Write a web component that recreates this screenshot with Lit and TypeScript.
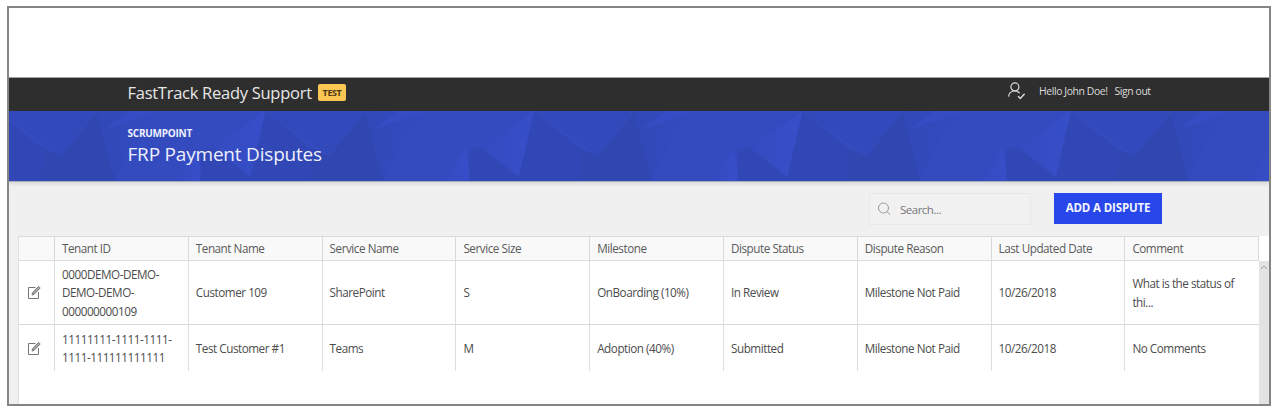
import { LitElement, html, css, svg } from "lit";
import { customElement } from "lit/decorators.js";

interface Dispute {
  tenantId: string[];
  tenant: string;
  service: string;
  size: string;
  milestone: string;
  status: string;
  reason: string;
  updated: string;
  comment: string[];
}

const COLUMNS = [
  "Tenant ID", "Tenant Name", "Service Name", "Service Size", "Milestone",
  "Dispute Status", "Dispute Reason", "Last Updated Date", "Comment",
];

const DISPUTES: Dispute[] = [
  {
    tenantId: ["0000DEMO-DEMO-", "DEMO-DEMO-", "000000000109"],
    tenant: "Customer 109", service: "SharePoint", size: "S",
    milestone: "OnBoarding (10%)", status: "In Review", reason: "Milestone Not Paid",
    updated: "10/26/2018", comment: ["What is the status of", "thi..."],
  },
  {
    tenantId: ["11111111-1111-1111-", "1111-111111111111"],
    tenant: "Test Customer #1", service: "Teams", size: "M",
    milestone: "Adoption (40%)", status: "Submitted", reason: "Milestone Not Paid",
    updated: "10/26/2018", comment: ["No Comments"],
  },
];

@customElement("top-bar")
class TopBar extends LitElement {
  static styles = css`
    :host { display: flex; height: 34px; box-sizing: border-box; background: #2e2e2e; color: #e6e6e6; border-top: 1px solid #a3a3a3; padding-left: 118.5px; }
    .title { font-size: 16.5px; line-height: 30px; letter-spacing: -0.27px; white-space: nowrap; width: 190.5px; }
    .badge { box-sizing: border-box; width: 28px; height: 17px; margin-top: 6px; border-radius: 2px; background: #fdc753; color: #4b3a18; font-size: 9px; font-weight: 700; line-height: 17px; text-align: center; letter-spacing: -0.4px; }
    .user { width: 18px; height: 18px; margin: 4px 0 0 661px; }
    .hello { width: 75.5px; margin-left: 14px; }
    .hello, .out { font-size: 10.4px; line-height: 27px; letter-spacing: -0.4px; white-space: nowrap; color: #dcdcdc; }
  `;
  render() {
    return html`
      <div class="title">FastTrack Ready Support</div>
      <div class="badge">TEST</div>
      <svg class="user" viewBox="0 0 18 18" fill="none" stroke="#d6d6d6" stroke-width="1.2">
        <circle cx="7.9" cy="4.9" r="4" />
        <path d="M1.6 14.6C1.9 11.2 4.4 9 7.9 9C10 9 11.7 9.8 12.8 11.2" />
        <path d="M11 14.3L13.3 16.4L17.6 11.8" stroke-width="1.5" />
      </svg>
      <div class="hello">Hello John Doe!</div>
      <div class="out">Sign out</div>
    `;
  }
}

@customElement("page-banner")
class PageBanner extends LitElement {
  static styles = css`
    :host { display: grid; height: 70px; background: #344bc0; color: #eef0fc; overflow: hidden; }
    .facets { grid-area: 1 / 1; width: 100%; height: 70px; display: block; }
    .heading { grid-area: 1 / 1; z-index: 1; padding: 15px 0 0 118.5px; }
    .eyebrow { font-size: 10px; line-height: 15px; font-weight: 700; letter-spacing: -0.25px; }
    .name { font-size: 19px; line-height: 26px; letter-spacing: -0.2px; white-space: nowrap; }
  `;
  render() {
    return html`
      <svg class="facets">
        <defs>
          <linearGradient id="lit" x1="0" y1="0" x2="1" y2="0">
            <stop offset="0" stop-color="#344bc0" /><stop offset="1" stop-color="#364ec8" />
          </linearGradient>
          <linearGradient id="side" x1="0" y1="0" x2="1" y2="0">
            <stop offset="0" stop-color="#3148b8" /><stop offset="1" stop-color="#344bc0" />
          </linearGradient>
          <pattern id="tile" x="-77" y="0" width="268.5" height="70" patternUnits="userSpaceOnUse">
            ${svg`
              <path d="M64.8 0H165L129 45Z" fill="#3249bb" />
              <path d="M64.8 0L112 38L129 45L110 70H48.5Z" fill="#3147b6" />
              <path d="M165 1L183 70H110L112 38L129 45Z" fill="#3046b1" />
              <path d="M165 0H228L205 22L183 70Z" fill="url(#side)" />
              <path d="M173 18L198 0H228Z" fill="#354cc4" />
              <path d="M64.8 0L13.2 37L49.8 66Z" fill="url(#lit)" />
              <path d="M-3.5 38L13.2 37L49.8 66L48.5 70H0Z" fill="#3147b6" />
              <path d="M265 38L268.5 60V70H245Z" fill="url(#lit)" />
            `}
          </pattern>
        </defs>
        <rect width="100%" height="70" fill="url(#tile)" />
      </svg>
      <div class="heading">
        <div class="eyebrow">SCRUMPOINT</div>
        <div class="name">FRP Payment Disputes</div>
      </div>
    `;
  }
}

@customElement("dispute-toolbar")
class DisputeToolbar extends LitElement {
  static styles = css`
    :host { display: flex; height: 55px; box-sizing: border-box; justify-content: flex-end; padding: 11px 107px 0 0; gap: 23px; border-top: 1px solid #a9abba; background: linear-gradient(#dcdcdc, #f0f0f0 5px); }
    .search { box-sizing: border-box; display: flex; width: 162px; height: 32px; border: 1px solid #e8e8e8; padding-left: 7px; gap: 9px; background: #f1f1f1; color: #777; font-size: 11.5px; line-height: 32px; letter-spacing: -0.5px; }
    .glass { width: 14px; height: 14px; margin-top: 8px; }
    .add { width: 108px; height: 31px; background: #2847ea; color: #f2f4ff; font-size: 11.5px; font-weight: 700; line-height: 29px; text-align: center; letter-spacing: -0.15px; white-space: nowrap; }
  `;
  render() {
    return html`
      <div class="search">
        <svg class="glass" viewBox="0 0 14 14" fill="none" stroke="#999" stroke-width="1">
          <circle cx="6.5" cy="6" r="5" /><path d="M10 9.6L13 12.8" />
        </svg>
        <span>Search...</span>
      </div>
      <div class="add">ADD A DISPUTE</div>
    `;
  }
}

@customElement("dispute-grid")
class DisputeGrid extends LitElement {
  static styles = css`
    :host { display: flex; flex-direction: column; margin-left: 9px; height: 168px; background: #fff; color: #4c4c4c; font-size: 11.7px; letter-spacing: -0.46px; border-left: 1px solid #e0e0e0; box-sizing: border-box; }
    .head, .row { display: grid; grid-template-columns: 36px repeat(9, 133.8px); width: 1240px; }
    .head { height: 25px; box-sizing: border-box; background: #f9f9f9; border-top: 1px solid #dadada; border-bottom: 1px solid #dedede; color: #5a5a5a; }
    .head .cell { border-color: #d8d8d8; }
    .main { display: flex; flex: 1; }
    .row { box-sizing: border-box; }
    .first { height: 64px; border-bottom: 1px solid #d9d9d9; }
    .second { height: 46px; }
    .cell { display: flex; flex-direction: column; justify-content: center; box-sizing: border-box; border-right: 1px solid #dedede; padding-left: 7px; line-height: 18.2px; white-space: nowrap; }
    .row .cell:last-child { border-right: 0; }
    .cell.icon { padding-left: 7.5px; }
    .pen { width: 14px; height: 15px; }
    .bar { flex: 1; background: #e3e3e3; }
    .arrow { display: block; width: 10px; height: 12px; }
  `;
  private row(d: Dispute, i: number) {
    const cells = [d.tenantId, [d.tenant], [d.service], [d.size], [d.milestone], [d.status], [d.reason], [d.updated], d.comment];
    return html`
      <div class="row ${i === 0 ? "first" : "second"}">
        <div class="cell icon">
          <svg class="pen" viewBox="0 0 14 15" fill="none" stroke="#777" stroke-width="1">
            <path d="M8.5 2.5H1.5V13.5H11.5V7" />
            <path d="M5 10L5.6 7.6L11.6 1.4L13.2 3L7.3 9.2Z" fill="#aaa" />
          </svg>
        </div>
        ${cells.map((lines) => html`<div class="cell">${lines.map((l) => html`<span>${l}</span>`)}</div>`)}
      </div>
    `;
  }
  render() {
    return html`
      <div class="head"><div class="cell"></div>${COLUMNS.map((c) => html`<div class="cell">${c}</div>`)}</div>
      <div class="main">
        <div>${DISPUTES.map((d, i) => this.row(d, i))}</div>
        <div class="bar">
          <svg class="arrow" viewBox="0 0 10 12" fill="none" stroke="#a0a0a0"><path d="M2 8L5 5L8 8" /></svg>
        </div>
      </div>
    `;
  }
}

@customElement("app-root")
class AppRoot extends LitElement {
  static styles = css`
    :host { display: block; box-sizing: border-box; height: 410px; padding: 6px 5px 4px 7px; background: #fff; font-family: "Open Sans", "Noto Sans", sans-serif; overflow: hidden; }
    .frame { box-sizing: border-box; width: 1264px; height: 400px; border: 2px solid #858585; background: #f0f0f0; overflow: hidden; }
    .blank { height: 69px; background: #fff; }
  `;
  render() {
    return html`
      <div class="frame">
        <div class="blank"></div>
        <top-bar></top-bar>
        <page-banner></page-banner>
        <dispute-toolbar></dispute-toolbar>
        <dispute-grid></dispute-grid>
      </div>
    `;
  }
}
